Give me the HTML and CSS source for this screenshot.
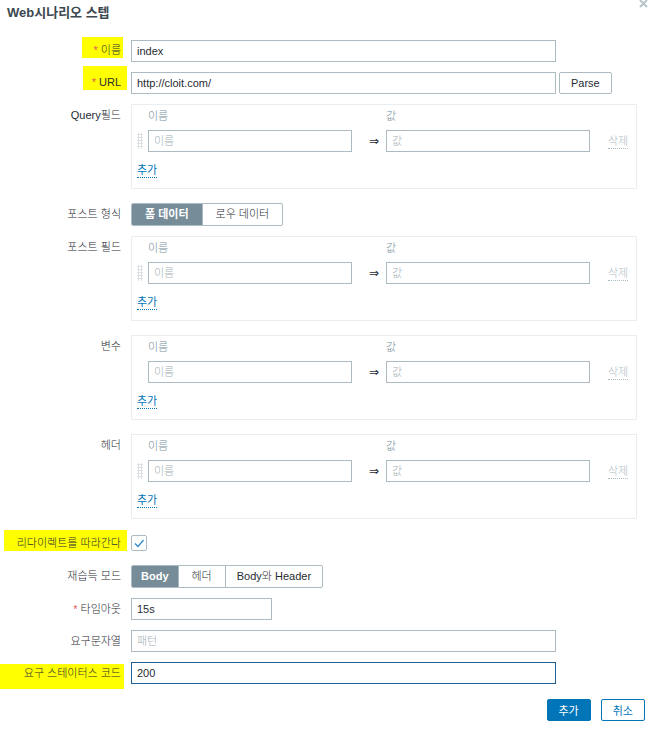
FILE: index.html
```html
<!DOCTYPE html>
<html lang="ko">
<head>
  <meta charset="UTF-8">
  <title>Web시나리오 스텝</title>
  <link rel="stylesheet" href="styles.css">
</head>
<body>

  <div class="dialog">
    <div class="dialog-head">
      <h4>Web시나리오 스텝</h4>
      <button type="button" class="btn-close" title="닫기">
        <svg width="9" height="8" viewBox="0 0 9 8"><path d="M1 0 L8 7 M8 0 L1 7" stroke="#b9c4ca" stroke-width="2"/></svg>
      </button>
    </div>

    <form class="form-list">
      <div class="row">
        <div class="lbl"><span class="hl hl-name"><span class="req">*</span> 이름</span></div>
        <div class="field"><input type="text" class="inp w-long" value="index"></div>
      </div>

      <div class="row">
        <div class="lbl"><span class="hl hl-url"><span class="req">*</span> URL</span></div>
        <div class="field">
          <input type="text" class="inp w-long" value="http://cloit.com/">
          <button type="button" class="btn-grey">Parse</button>
        </div>
      </div>

      <div class="row row-table">
        <div class="lbl">Query필드</div>
        <div class="pairs">
          <span></span><span class="col-head">이름</span><span></span><span class="col-head">값</span><span></span>
          <span class="drag"></span>
          <input type="text" class="inp" placeholder="이름">
          <span class="arrow">⇒</span>
          <input type="text" class="inp" placeholder="값">
          <a class="remove">삭제</a>
          <div class="pairs-foot"><a class="link-add">추가</a></div>
        </div>
      </div>

      <div class="row">
        <div class="lbl">포스트 형식</div>
        <div class="seg">
          <span class="seg-item ko on">폼 데이터</span>
          <span class="seg-item ko">로우 데이터</span>
        </div>
      </div>

      <div class="row row-table">
        <div class="lbl">포스트 필드</div>
        <div class="pairs">
          <span></span><span class="col-head">이름</span><span></span><span class="col-head">값</span><span></span>
          <span class="drag"></span>
          <input type="text" class="inp" placeholder="이름">
          <span class="arrow">⇒</span>
          <input type="text" class="inp" placeholder="값">
          <a class="remove">삭제</a>
          <div class="pairs-foot"><a class="link-add">추가</a></div>
        </div>
      </div>

      <div class="row row-table">
        <div class="lbl">변수</div>
        <div class="pairs">
          <span></span><span class="col-head">이름</span><span></span><span class="col-head">값</span><span></span>
          <span></span>
          <input type="text" class="inp" placeholder="이름">
          <span class="arrow">⇒</span>
          <input type="text" class="inp" placeholder="값">
          <a class="remove">삭제</a>
          <div class="pairs-foot"><a class="link-add">추가</a></div>
        </div>
      </div>

      <div class="row row-table">
        <div class="lbl">헤더</div>
        <div class="pairs">
          <span></span><span class="col-head">이름</span><span></span><span class="col-head">값</span><span></span>
          <span class="drag"></span>
          <input type="text" class="inp" placeholder="이름">
          <span class="arrow">⇒</span>
          <input type="text" class="inp" placeholder="값">
          <a class="remove">삭제</a>
          <div class="pairs-foot"><a class="link-add">추가</a></div>
        </div>
      </div>

      <div class="row row-check">
        <div class="lbl"><span class="hl hl-redirect">리다이렉트를 따라간다</span></div>
        <span class="check">
          <svg width="14" height="14" viewBox="0 0 14 14"><path d="M3 7.5 L6 10.5 L11.5 4" fill="none" stroke="#2b86c8" stroke-width="1.2"/></svg>
        </span>
      </div>

      <div class="row">
        <div class="lbl">재습득 모드</div>
        <div class="seg">
          <span class="seg-item lat on">Body</span>
          <span class="seg-item ko">헤더</span>
          <span class="seg-item">Body와 Header</span>
        </div>
      </div>

      <div class="row">
        <div class="lbl"><span class="req">*</span>&nbsp;타임아웃</div>
        <div class="field"><input type="text" class="inp w-short" value="15s"></div>
      </div>

      <div class="row">
        <div class="lbl">요구문자열</div>
        <div class="field"><input type="text" class="inp w-long" placeholder="패턴"></div>
      </div>

      <div class="row">
        <div class="lbl"><span class="hl hl-status">요구 스테이터스 코드</span></div>
        <div class="field"><input type="text" class="inp w-long is-focus" value="200"></div>
      </div>
    </form>

    <div class="form-actions">
      <button type="button" class="btn">추가</button>
      <button type="button" class="btn btn-alt">취소</button>
    </div>
  </div>

</body>
</html>
```

FILE: styles.css
```css
* {
  box-sizing: border-box;
}

body {
  margin: 0;
  font-family: "Liberation Sans", Arial, "Noto Sans CJK KR", sans-serif;
  font-size: 11px;
  font-weight: 300;
  color: #1f2c33;
  background-color: #fff;
}

.dialog {
  width: 650px;
}

.dialog-head {
  display: flex;
  justify-content: space-between;
  align-items: flex-start;
  height: 40px;
}

.dialog-head h4 {
  margin: 4px 0 0 7px;
  font-size: 13px;
  line-height: 18px;
  font-weight: bold;
  color: #3c4850;
}

.btn-close {
  width: 9px;
  height: 8px;
  margin-right: 2px;
  padding: 0;
  border: none;
  background: none;
  line-height: 0;
}

.form-list {
  display: flex;
  flex-direction: column;
  gap: 10px;
  margin: 0;
}

.row {
  display: flex;
  gap: 10px;
  align-items: flex-start;
}

.row-table {
  margin-bottom: 4px;
}

.row-check {
  height: 22px;
}

.lbl {
  width: 121px;
  height: 22px;
  flex: none;
  display: flex;
  justify-content: flex-end;
  align-items: flex-start;
  line-height: 22px;
  white-space: nowrap;
}

.req {
  color: #e45959;
}

/* yellow marker highlights */
.hl {
  display: inline-block;
  background-color: #ffff00;
  line-height: 15px;
}

.hl-name {
  margin: -3px -2px 0 0;
  padding: 6px 2px 0 11px;
}

.hl-url {
  margin: -6px -6px 0 0;
  padding: 9px 6px 0 9px;
}

.hl-redirect {
  margin: -3px -6px 0 0;
  padding: 6px 6px 0 13px;
}

.hl-status {
  margin: 2px -3px 0 0;
  padding: 2px 3px 8px 24px;
}

.field {
  display: flex;
  gap: 3px;
}

.inp {
  height: 22px;
  padding: 0 5px;
  border: 1px solid #acbbc2;
  border-radius: 0;
  background: #fff;
  font: inherit;
  color: #1f2c33;
  outline: none;
}

.inp::placeholder {
  color: #a3afb5;
}

.inp.is-focus {
  border-color: #1c5f94;
}

.w-long {
  width: 425px;
}

.w-short {
  width: 141px;
}

.btn-grey {
  height: 22px;
  padding: 0 11px;
  border: 1px solid #acbbc2;
  border-radius: 2px;
  background: #fff;
  font: inherit;
  font-weight: normal;
  color: #1f2c33;
}

.pairs {
  width: 506px;
  border: 1px solid #ebeef0;
  padding: 0 5px 7px;
  display: grid;
  grid-template-columns: 11px 204px 34px 204px 1fr;
  row-gap: 3px;
}

.pairs .inp {
  width: 100%;
}

.col-head {
  line-height: 22px;
  color: #768d99;
}

.drag {
  width: 6px;
  height: 16px;
  align-self: center;
  background: radial-gradient(circle, #d4dbdf 45%, transparent 55%) 0 0 / 3px 3px;
}

.arrow {
  padding-left: 17px;
  line-height: 22px;
  font-family: "DejaVu Sans", sans-serif;
  font-size: 12px;
  font-weight: normal;
}

.remove {
  justify-self: start;
  align-self: center;
  margin-left: 18px;
  line-height: 14px;
  color: #acbbc2;
  border-bottom: 1px dotted #acbbc2;
}

.pairs-foot {
  grid-column: 1 / -1;
  display: flex;
  align-items: center;
  height: 22px;
  margin-top: 4px;
}

.link-add {
  line-height: 14px;
  font-weight: normal;
  color: #0275b8;
  border-bottom: 1px dotted #0275b8;
}

.seg {
  display: flex;
  height: 23px;
  border: 1px solid #acbbc2;
  border-radius: 2px;
  overflow: hidden;
}

.seg-item {
  padding: 0 11px;
  line-height: 21px;
  border-left: 1px solid #acbbc2;
}

.seg-item.ko {
  padding: 0 13px;
}

.seg-item.lat {
  padding: 0 9px;
}

.seg-item:first-child {
  border-left: none;
}

.seg-item.on {
  background-color: #768d99;
  color: #fff;
  font-weight: bold;
}

.check {
  width: 16px;
  height: 16px;
  margin-top: 2px;
  border: 1px solid #acbbc2;
  border-radius: 2px;
  display: flex;
  align-items: center;
  justify-content: center;
}

.form-actions {
  display: flex;
  justify-content: flex-end;
  gap: 10px;
  margin-top: 15px;
  padding-right: 5px;
}

.btn {
  height: 22px;
  padding: 0 11px;
  border: 1px solid #0275b8;
  border-radius: 2px;
  background-color: #0275b8;
  font: inherit;
  font-weight: normal;
  color: #fff;
}

.btn-alt {
  background-color: #fff;
  color: #0275b8;
}
```
